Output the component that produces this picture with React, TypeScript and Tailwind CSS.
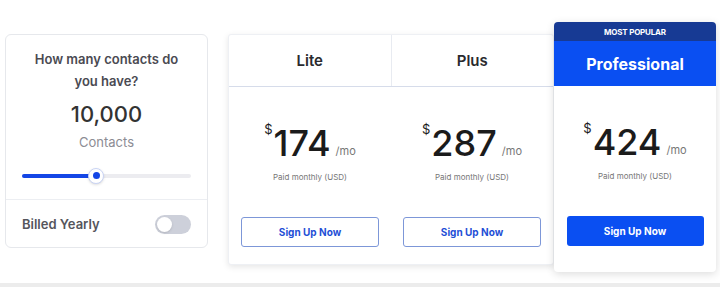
import React from "react";

const plans = [
  { name: "Lite", price: "174" },
  { name: "Plus", price: "287" },
];

const Price = ({ value }: { value: string }) => (
  <div className="flex flex-col items-center">
    <div className="flex items-end text-[#1b1b1b] h-[40px]">
      <span className="text-[13px] leading-none self-start mt-[3px] mr-[1px]">$</span>
      <span className="text-[36px] leading-[34px] font-medium">{value}</span>
      <span className="text-[11px] text-[#777] ml-[5px] mb-[1px]">/mo</span>
    </div>
    <div className="text-[8px] text-[#777] mt-[11px]">Paid monthly (USD)</div>
  </div>
);

const Slider = () => (
  <div className="relative h-[16px] flex items-center">
    <div className="w-full h-[4px] rounded-full bg-[#ececf0]" />
    <div className="absolute left-0 h-[4px] rounded-full bg-[#1446e6]" style={{ width: "44%" }} />
    <div
      className="absolute w-[16px] h-[16px] rounded-full bg-white border border-[#c9d4f5] shadow-sm flex items-center justify-center"
      style={{ left: "calc(44% - 8px)" }}
    >
      <div className="w-[7px] h-[7px] rounded-full bg-[#1446e6]" />
    </div>
  </div>
);

export default function App() {
  return (
    <div className="w-[720px] h-[287px] bg-white font-['Inter','Liberation_Sans',sans-serif] flex flex-col overflow-hidden">
      <div className="h-[283px] flex items-start pl-[5px]">
        {/* contacts card */}
        <div className="mt-[34px] w-[203px] h-[214px] rounded-[6px] border border-[#e6e8ec] flex flex-col">
          <div className="flex flex-col items-center px-[16px] pt-[13px]">
            <div className="text-[13px] leading-[22px] font-semibold text-[#4a4a52] text-center">
              How many contacts do
              <br />
              you have?
            </div>
            <div className="text-[22px] leading-[28px] font-medium text-[#333] mt-[8px]">10,000</div>
            <div className="text-[13px] text-[#8c8c94] mt-[5px]">Contacts</div>
          </div>
          <div className="px-[16px] mt-[15px]">
            <Slider />
          </div>
          <div className="border-t border-[#eceef2] mt-[15px] flex-1 flex items-center justify-between px-[16px] pt-[3px]">
            <span className="text-[13px] font-semibold text-[#55555c]">Billed Yearly</span>
            <div className="w-[36px] h-[19px] rounded-full bg-[#cdd0da] p-[2px] flex items-center">
              <div className="w-[15px] h-[15px] rounded-full bg-white shadow" />
            </div>
          </div>
        </div>

        {/* lite + plus */}
        <div className="mt-[34px] ml-[20px] w-[326px] h-[231px] bg-white rounded-[3px] shadow-[0_2px_6px_rgba(0,0,0,0.10)] border border-[#eef0f4] flex flex-col">
          <div className="h-[52px] flex border-b border-[#d6dcea]">
            {plans.map((p, i) => (
              <div
                key={p.name}
                className={
                  "flex-1 flex items-center justify-center text-[15px] font-semibold text-[#2a2a2e] pt-[2px]" +
                  (i === 0 ? " border-r border-[#e8ebf1]" : "")
                }
              >
                {p.name}
              </div>
            ))}
          </div>
          <div className="flex flex-1">
            {plans.map((p) => (
              <div key={p.name} className="flex-1 flex flex-col items-center pt-[33px] px-[12px]">
                <Price value={p.price} />
                <button className="mt-[34px] w-[138px] h-[30px] rounded-[3px] border border-[#7d97d8] text-[10px] font-bold text-[#1f4fd6] bg-white">
                  Sign Up Now
                </button>
              </div>
            ))}
          </div>
        </div>

        {/* professional */}
        <div className="mt-[22px] w-[162px] h-[250px] bg-white rounded-[4px] shadow-[0_2px_8px_rgba(0,0,0,0.14)] flex flex-col overflow-hidden">
          <div className="h-[19px] bg-[#173a94] flex items-center justify-center text-[8px] font-bold text-white tracking-[-0.2px]">
            MOST POPULAR
          </div>
          <div className="h-[45px] bg-[#0a4ff2] flex items-center justify-center text-[16px] font-bold text-white">
            Professional
          </div>
          <div className="flex flex-col items-center pt-[33px]">
            <Price value="424" />
            <button className="mt-[34px] w-[137px] h-[30px] rounded-[3px] bg-[#0a4ff2] text-[10px] font-bold text-white">
              Sign Up Now
            </button>
          </div>
        </div>
      </div>
      <div className="h-[4px] bg-[#ececec]" />
    </div>
  );
}
